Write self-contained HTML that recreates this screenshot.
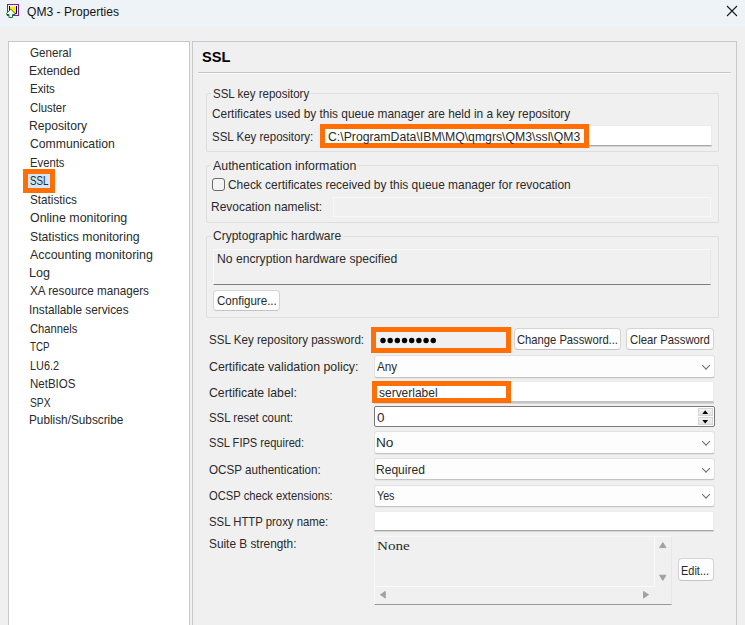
<!DOCTYPE html>
<html><head><meta charset="utf-8">
<style>
*{margin:0;padding:0;box-sizing:border-box}
html,body{width:745px;height:625px;overflow:hidden;background:#f0f0f0;font-family:"Liberation Sans",sans-serif;font-size:13px;color:#2a2a2a}
.a{position:absolute}
.t{position:absolute;white-space:nowrap;transform-origin:0 0;line-height:16px}
.grp{position:absolute;border:1px solid #dedede;border-radius:2px}
.lg{position:absolute;background:#f0f0f0}
.fld{position:absolute;background:#fff;border:1px solid #ececec;border-bottom:1px solid #a6a6a6;box-shadow:0 1px 0 #d6d6d6}
.cmb{position:absolute;background:#fdfdfd;border:1px solid #e2e2e2;border-bottom:1px solid #c4c4c4;border-radius:3px;box-shadow:0 .5px 0 #dcdcdc}
.btn{position:absolute;background:#fdfdfd;border:1px solid #d4d4d4;border-bottom-color:#c4c4c4;border-radius:4px}
.org{position:absolute;border:5px solid #ff6f06}
.chev{position:absolute;width:6px;height:6px;border-right:1px solid #6a6a6a;border-bottom:1px solid #6a6a6a;transform:translateY(.5px) rotate(45deg)}
</style></head><body>
<div class="a" style="left:0;top:0;width:745px;height:27px;background:#eef3f8"></div>
<svg class="a" style="left:0;top:0" width="24" height="24" viewBox="0 0 24 24">
  <rect x="7.5" y="4.5" width="11" height="11" fill="#f3ecf8" stroke="#7a1fa0" stroke-width="1"/>
  <rect x="10" y="6.6" width="6" height="7" fill="#ffee00"/>
  <path d="M9.5 6V13.5H16.5V6" fill="none" stroke="#000" stroke-width="1"/>
  <path d="M10.8 9.2L6.5 13.4V14.5H9V17.5H12.5V14.5H15V13.4Z" fill="#fff" stroke="#137a2e" stroke-width="1"/>
</svg>
<svg class="a" style="left:726px;top:5.4px" width="12" height="12" viewBox="0 0 12 12"><path d="M1 1L11 11M11 1L1 11" stroke="#1a1a1a" stroke-width="1.1"/></svg>

<div class="a" style="left:8px;top:41px;width:182px;height:600px;background:#fff;border:1px solid #c8c8cc"></div>
<div class="a" style="left:23px;top:169px;width:32px;height:24px;background:#ff6f06"></div>
<div class="a" style="left:28px;top:174px;width:22px;height:14px;background:#cde7fb"></div>

<div class="a" style="left:192px;top:41px;width:545px;height:600px;border:1px solid #c8c8cc"></div>
<div class="a" style="left:198px;top:72px;width:533px;height:1px;background:#c6c6c6"></div>
<div class="a" style="left:198px;top:73px;width:533px;height:1px;background:#fafafa"></div>

<!-- group 1 -->
<div class="grp" style="left:206px;top:93px;width:513px;height:59px"></div>
<div class="lg" style="left:211px;top:86px;width:100px;height:14px"></div>
<div class="fld" style="left:320px;top:125px;width:392px;height:21px"></div>
<div class="org" style="left:320px;top:124px;width:269px;height:24px"></div>

<!-- group 2 -->
<div class="grp" style="left:206px;top:165px;width:513px;height:58px"></div>
<div class="lg" style="left:211px;top:158px;width:146px;height:14px"></div>
<div class="a" style="left:212px;top:178px;width:13px;height:13px;border:1px solid #6a6a6a;border-radius:3px;background:#f4f4f4"></div>
<div class="a" style="left:333px;top:197px;width:378px;height:20px;border:1px solid #f8f8f8"></div>

<!-- group 3 -->
<div class="grp" style="left:206px;top:236px;width:513px;height:82px"></div>
<div class="lg" style="left:211px;top:229px;width:132px;height:14px"></div>
<div class="a" style="left:213px;top:249px;width:498px;height:36px;border:1px solid #e8e8e8;border-left-color:#f9f9f9;border-top-color:#f9f9f9;border-bottom:1px solid #7e7e7e"></div>
<div class="btn" style="left:213px;top:290px;width:67px;height:21px"></div>

<!-- lower -->
<div class="org" style="left:371px;top:327px;width:140px;height:26px"></div>
<svg class="a" style="left:0;top:0" width="745" height="625" viewBox="0 0 745 625"><circle cx="383.00" cy="340.5" r="2.7"/><circle cx="390.18" cy="340.5" r="2.7"/><circle cx="397.36" cy="340.5" r="2.7"/><circle cx="404.54" cy="340.5" r="2.7"/><circle cx="411.72" cy="340.5" r="2.7"/><circle cx="418.90" cy="340.5" r="2.7"/><circle cx="426.08" cy="340.5" r="2.7"/><circle cx="433.26" cy="340.5" r="2.7"/></svg>
<div class="btn" style="left:514px;top:328px;width:107px;height:22px"></div>
<div class="btn" style="left:626px;top:328px;width:88px;height:22px"></div>

<div class="cmb" style="left:374px;top:355px;width:341px;height:23px"></div>
<div class="chev" style="left:703px;top:362px"></div>

<div class="fld" style="left:374px;top:381px;width:340px;height:22px;border-bottom:2px solid #c4c4c4"></div>
<div class="org" style="left:372px;top:381px;width:139px;height:22px"></div>

<div class="a" style="left:374px;top:406px;width:341px;height:21px;background:#fff;border:1px solid #7a7a7a;border-radius:2px"></div>
<div class="a" style="left:698px;top:408px;width:15px;height:8px;background:linear-gradient(#f2f2f2,#e4e4e4);border:1px solid #d6d6d6"></div>
<div class="a" style="left:698px;top:417px;width:15px;height:8px;background:linear-gradient(#f2f2f2,#e4e4e4);border:1px solid #d6d6d6"></div>
<svg class="a" style="left:700px;top:409px" width="12" height="16" viewBox="0 0 12 16"><path d="M2.3 4.9L5.2 1.2L8.1 4.9Z" fill="#000"/><path d="M2.3 11.1H8.1L5.2 14.5Z" fill="#000"/></svg>

<div class="cmb" style="left:374px;top:431px;width:341px;height:23px"></div>
<div class="chev" style="left:703px;top:438px"></div>
<div class="cmb" style="left:374px;top:458px;width:341px;height:22px"></div>
<div class="chev" style="left:703px;top:465px"></div>
<div class="cmb" style="left:374px;top:484.5px;width:341px;height:22px"></div>
<div class="chev" style="left:703px;top:491px"></div>

<div class="fld" style="left:374px;top:511px;width:340px;height:20px"></div>

<div class="a" style="left:374px;top:536px;width:298px;height:69px;border:1px solid #e6e6e6;border-bottom:1px solid #9a9a9a;border-top-color:#f8f8f8;border-left-color:#f8f8f8"></div>
<div class="a" style="left:654px;top:537px;width:1.2px;height:50px;background:#fafafa"></div>
<div class="a" style="left:375px;top:586px;width:280px;height:1.2px;background:#fafafa"></div>
<svg class="a" style="left:375px;top:537px" width="296" height="68" viewBox="0 0 296 68">
<g fill="#a0a0a0" stroke="#a0a0a0" stroke-width="0.9" stroke-linejoin="round">
<path d="M284.6 10.6L287.8 5.6L291 10.6Z"/>
<path d="M284.6 38.2H291L287.8 43.4Z"/>
<path d="M10.3 54.4V61.1L5.4 57.7Z"/>
<path d="M268.5 54.4V61.1L273.6 57.7Z"/>
</g>
</svg>
<div class="btn" style="left:678px;top:558px;width:36px;height:23px"></div>

<div class="t" style="left:26.93px;top:4.0px;transform:scaleX(0.9297);color:#141414">QM3 - Properties</div>
<div class="t" style="left:29.92px;top:45.0px;transform:scaleX(0.8928)">General</div>
<div class="t" style="left:29.15px;top:63.0px;transform:scaleX(0.9258)">Extended</div>
<div class="t" style="left:29.84px;top:81.0px;transform:scaleX(0.8816)">Exits</div>
<div class="t" style="left:29.87px;top:99.7px;transform:scaleX(0.8725)">Cluster</div>
<div class="t" style="left:29.22px;top:118.1px;transform:scaleX(0.9346)">Repository</div>
<div class="t" style="left:30.16px;top:136.1px;transform:scaleX(0.9392)">Communication</div>
<div class="t" style="left:29.59px;top:154.8px;transform:scaleX(0.8653)">Events</div>
<div class="t" style="left:29.96px;top:173.3px;transform:scaleX(0.7541)">SSL</div>
<div class="t" style="left:30.16px;top:192.1px;transform:scaleX(0.9006)">Statistics</div>
<div class="t" style="left:29.70px;top:210.0px;transform:scaleX(0.9547)">Online monitoring</div>
<div class="t" style="left:29.88px;top:228.8px;transform:scaleX(0.9414)">Statistics monitoring</div>
<div class="t" style="left:30.14px;top:247.2px;transform:scaleX(0.9556)">Accounting monitoring</div>
<div class="t" style="left:29.14px;top:265.4px;transform:scaleX(0.9655)">Log</div>
<div class="t" style="left:30.41px;top:283.3px;transform:scaleX(0.8992)">XA resource managers</div>
<div class="t" style="left:29.12px;top:302.1px;transform:scaleX(0.9066)">Installable services</div>
<div class="t" style="left:30.05px;top:320.7px;transform:scaleX(0.8615)">Channels</div>
<div class="t" style="left:30.27px;top:339.0px;transform:scaleX(0.7534)">TCP</div>
<div class="t" style="left:29.95px;top:357.7px;transform:scaleX(0.8359)">LU6.2</div>
<div class="t" style="left:29.51px;top:375.8px;transform:scaleX(0.8853)">NetBIOS</div>
<div class="t" style="left:29.87px;top:394.5px;transform:scaleX(0.7863)">SPX</div>
<div class="t" style="left:28.98px;top:412.4px;transform:scaleX(0.9067)">Publish/Subscribe</div>
<div class="t" style="left:202.35px;top:49.2px;transform:scaleX(1.0407);font-weight:bold;font-size:14px;color:#000">SSL</div>
<div class="t" style="left:212.73px;top:86.4px;transform:scaleX(0.8855)">SSL key repository</div>
<div class="t" style="left:212.16px;top:106.4px;transform:scaleX(0.9129)">Certificates used by this queue manager are held in a key repository</div>
<div class="t" style="left:211.91px;top:129.0px;transform:scaleX(0.8848)">SSL Key repository:</div>
<div class="t" style="left:327.95px;top:128.5px;transform:scaleX(0.9414)">C:\ProgramData\IBM\MQ\qmgrs\QM3\ssl\QM3</div>
<div class="t" style="left:213.04px;top:157.8px;transform:scaleX(0.9533)">Authentication information</div>
<div class="t" style="left:227.50px;top:177.0px;transform:scaleX(0.9175)">Check certificates received by this queue manager for revocation</div>
<div class="t" style="left:211.04px;top:199.4px;transform:scaleX(0.9209)">Revocation namelist:</div>
<div class="t" style="left:212.69px;top:228.2px;transform:scaleX(0.9239)">Cryptographic hardware</div>
<div class="t" style="left:216.66px;top:251.2px;transform:scaleX(0.9349)">No encryption hardware specified</div>
<div class="t" style="left:216.58px;top:293.3px;transform:scaleX(0.8897)">Configure...</div>
<div class="t" style="left:208.97px;top:332.1px;transform:scaleX(0.8930)">SSL Key repository password:</div>
<div class="t" style="left:517.14px;top:332.0px;transform:scaleX(0.8625)">Change Password...</div>
<div class="t" style="left:629.71px;top:331.7px;transform:scaleX(0.8710)">Clear Password</div>
<div class="t" style="left:208.96px;top:358.8px;transform:scaleX(0.9488)">Certificate validation policy:</div>
<div class="t" style="left:376.71px;top:359.1px;transform:scaleX(0.9010)">Any</div>
<div class="t" style="left:208.97px;top:384.6px;transform:scaleX(0.9427)">Certificate label:</div>
<div class="t" style="left:378.88px;top:384.7px;transform:scaleX(0.9210)">serverlabel</div>
<div class="t" style="left:209.41px;top:409.5px;transform:scaleX(0.8787)">SSL reset count:</div>
<div class="t" style="left:377.44px;top:409.8px;transform:scaleX(1.0343)">0</div>
<div class="t" style="left:209.21px;top:434.6px;transform:scaleX(0.8528)">SSL FIPS required:</div>
<div class="t" style="left:375.83px;top:435.3px;transform:scaleX(1.0511)">No</div>
<div class="t" style="left:209.18px;top:461.6px;transform:scaleX(0.8950)">OCSP authentication:</div>
<div class="t" style="left:375.98px;top:461.6px;transform:scaleX(0.9261)">Required</div>
<div class="t" style="left:209.48px;top:487.6px;transform:scaleX(0.8612)">OCSP check extensions:</div>
<div class="t" style="left:376.71px;top:488.2px;transform:scaleX(0.8237)">Yes</div>
<div class="t" style="left:209.12px;top:513.5px;transform:scaleX(0.8732)">SSL HTTP proxy name:</div>
<div class="t" style="left:209.07px;top:535.6px;transform:scaleX(0.9100)">Suite B strength:</div>
<div class="t" style="left:376.58px;top:537.8px;transform:scaleX(1.2125);font-family:'Liberation Serif',serif;font-size:12.5px">None</div>
<div class="t" style="left:681.41px;top:562.9px;transform:scaleX(0.8428)">Edit...</div>
</body></html>
